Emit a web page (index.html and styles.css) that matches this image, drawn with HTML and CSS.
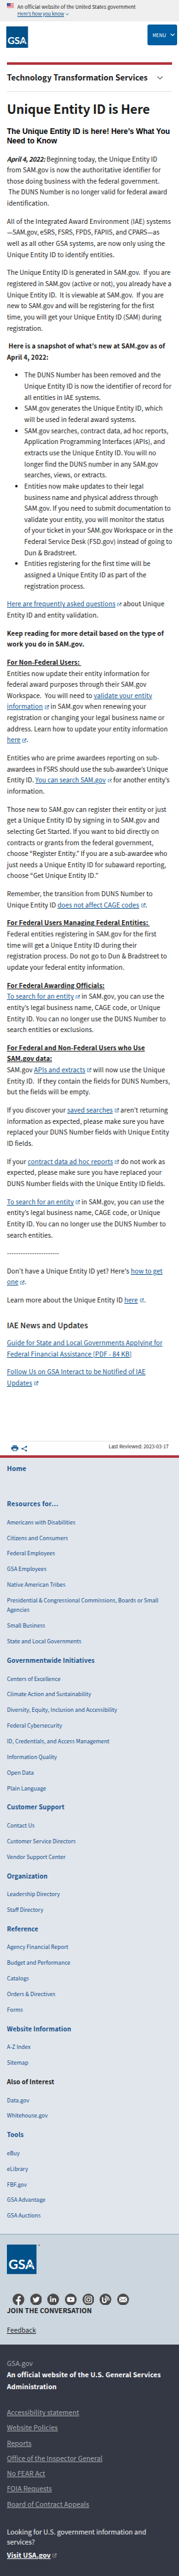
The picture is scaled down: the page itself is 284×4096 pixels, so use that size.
FILE: index.html
```html
<!DOCTYPE html>
<html lang="en">
<head>
<meta charset="utf-8">
<title>Unique Entity ID is Here | GSA</title>
<link rel="stylesheet" href="styles.css">
</head>
<body>
<svg class="defs" aria-hidden="true">
  <symbol id="launch" viewBox="0 0 20 20"><path d="M9 3.2H2.2v14.6h14.600V11" fill="none" stroke="currentColor" stroke-width="2"/><path d="M11.500 1H19.500v8l-3-3-6.800 7.200-2.400-2.400L14.400 4z" fill="currentColor"/></symbol>
</svg>

<div class="banner">
  <svg class="flag" viewBox="0 0 16 11"><rect width="16" height="11" fill="#fff"/><path d="M0 .6h16M0 2.600h16M0 4.600h16M0 6.600h16M0 8.500h16M0 10.400h16" stroke="#d8433c" stroke-width="1"/><rect width="8" height="6.500" fill="#2a3190"/><path d="M1 1.500h6M1.800 3.200h5M1 5h6" stroke="#fff" stroke-width=".8" stroke-dasharray=".8 1"/></svg>
  <div class="banner-text">
    <p>An official website of the United States government</p>
    <p class="know"><a href="#">Here’s how you know</a><svg class="know-chevron" viewBox="0 0 8 5"><path d="M1 1l3 3 3-3" fill="none" stroke="currentColor" stroke-width="1.400"/></svg></p>
  </div>
</div>

<header class="header">
  <svg class="logo" viewBox="0 0 100 100" preserveAspectRatio="none"><rect width="100" height="100" fill="#00508a"/><text class="logo-text" x="5.500" y="83.500" textLength="87.500" lengthAdjust="spacingAndGlyphs">GSA</text><path d="M79 61l2.600 7h7.400l-5.800 4.700 3.300 8.300-7.500-4.800-7.500 4.800 3.300-8.300-5.800-4.700h7.400z" fill="#fff" stroke="#00508a" stroke-width="1.800"/></svg>
  <button class="menu"><span>MENU</span><svg class="menu-chevron" viewBox="0 0 11 7"><path d="M1 1l4.500 4.500L10 1" fill="none" stroke="currentColor" stroke-width="1.700"/></svg></button>
</header>

<nav class="section-nav">
  <span>Technology Transformation Services</span>
  <svg class="nav-chevron" viewBox="0 0 14 8"><path d="M1 1l6 6 6-6" fill="none" stroke="currentColor" stroke-width="1.700"/></svg>
</nav>

<main class="content">
<h1>Unique Entity ID is Here</h1>
<h2>The Unique Entity ID is here! Here’s What You<br>Need to Know</h2>
<p><strong class="date">April 4, 2022:</strong> <span class="snug">Beginning today, the Unique Entity ID</span><br>from SAM.gov is now the authoritative identifier for<br>those doing business with the federal government.<br><span class="snug">&nbsp;The DUNS Number is no longer valid for federal award</span><br>identification.</p>
<p><span class="loose">All of the Integrated Award Environment (IAE) systems</span><br><span class="tight">—SAM.gov, eSRS, FSRS, FPDS, FAPIIS, and CPARS—as</span><br>well as all other GSA systems, are now only using the<br>Unique Entity ID to identify entities.</p>
<p class="snug">The Unique Entity ID is generated in SAM.gov.&nbsp; If you are<br>registered in SAM.gov (active or not), you already have a<br>Unique Entity ID.&nbsp; It is viewable at SAM.gov.&nbsp; If you are<br>new to SAM.gov and will be registering for the first<br>time, you will get your Unique Entity ID (SAM) during<br>registration.</p>
<p><strong>&nbsp;Here is a snapshot of what’s new at SAM.gov as of<br>April 4, 2022:</strong></p>
<ul>
  <li>The DUNS Number has been removed and the<br>Unique Entity ID is now the identifier of record for<br>all entities in IAE systems.</li>
  <li>SAM.gov generates the Unique Entity ID, which<br>will be used in federal award systems.</li>
  <li>SAM.gov searches, contract data, ad hoc reports,<br>Application Programming Interfaces (APIs), and<br>extracts use the Unique Entity ID. You will no<br>longer find the DUNS number in any SAM.gov<br>searches, views, or extracts.</li>
  <li>Entities now make updates to their legal<br>business name and physical address through<br>SAM.gov. If you need to submit documentation to<br>validate your entity, you will monitor the status<br>of your ticket in your SAM.gov Workspace or in the<br>Federal Service Desk (FSD.gov) instead of going to<br>Dun &amp; Bradstreet.</li>
  <li>Entities registering for the first time will be<br>assigned a Unique Entity ID as part of the<br>registration process.</li>
</ul>
<p><a href="#">Here are frequently asked questions</a><svg class="ext"><use href="#launch"/></svg> about Unique<br>Entity ID and entity validation.</p>
<p><strong>Keep reading for more detail based on the type of<br>work you do in SAM.gov.</strong></p>
<p><strong class="label">For Non-Federal Users:&nbsp;</strong><br>Entities now update their entity information for<br>federal award purposes through their SAM.gov<br>Workspace.&nbsp; You will need to <a href="#">validate your entity<br>information</a><svg class="ext"><use href="#launch"/></svg> in SAM.gov when renewing your<br>registration or changing your legal business name or<br>address. Learn how to update your entity information<br><a href="#">here</a><svg class="ext"><use href="#launch"/></svg>.</p>
<p>Entities who are prime awardees reporting on sub-<br><span class="tight">awardees in FSRS should use the sub-awardee’s Unique</span><br><span class="snug">Entity ID. <a href="#">You can search SAM.gov</a><svg class="ext"><use href="#launch"/></svg> for another entity’s</span><br>information.</p>
<p>Those new to SAM.gov can register their entity or just<br>get a Unique Entity ID by signing in to SAM.gov and<br>selecting Get Started. If you want to bid directly on<br>contracts or grants from the federal government,<br><span class="snug">choose “Register Entity.” If you are a sub-awardee who</span><br>just needs a Unique Entity ID for subaward reporting,<br>choose “Get Unique Entity ID.”</p>
<p>Remember, the transition from DUNS Number to<br>Unique Entity ID <a href="#">does not affect CAGE codes</a><svg class="ext"><use href="#launch"/></svg>.</p>
<p><strong class="label">For Federal Users Managing Federal Entities:&nbsp;</strong><br>Federal entities registering in SAM.gov for the first<br>time will get a Unique Entity ID during their<br>registration process. Do not go to Dun &amp; Bradstreet to<br>update your federal entity information.</p>
<p><strong class="label">For Federal Awarding Officials:</strong><br><a href="#">To search for an entity</a><svg class="ext"><use href="#launch"/></svg> in SAM.gov, you can use the<br>entity’s legal business name, CAGE code, or Unique<br>Entity ID. You can no longer use the DUNS Number to<br>search entities or exclusions.</p>
<p><strong class="label">For Federal and Non-Federal Users who Use<br>SAM.gov data:</strong><br>SAM.gov <a href="#">APIs and extracts</a><svg class="ext"><use href="#launch"/></svg> will now use the Unique<br>Entity ID.&nbsp; If they contain the fields for DUNS Numbers,<br>but the fields will be empty.</p>
<p>If you discover your <a href="#">saved searches</a><svg class="ext"><use href="#launch"/></svg> aren’t returning<br>information as expected, please make sure you have<br>replaced your DUNS Number fields with Unique Entity<br>ID fields.</p>
<p>If your <a href="#">contract data ad hoc reports</a><svg class="ext"><use href="#launch"/></svg> do not work as<br>expected, please make sure you have replaced your<br>DUNS Number fields with the Unique Entity ID fields.</p>
<p><a href="#">To search for an entity</a><svg class="ext"><use href="#launch"/></svg> in SAM.gov, you can use the<br>entity’s legal business name, CAGE code, or Unique<br>Entity ID. You can no longer use the DUNS Number to<br>search entities.</p>
<p>-----------------------</p>
<p>Don’t have a Unique Entity ID yet? Here's <a href="#">how to get<br>one</a><svg class="ext"><use href="#launch"/></svg>.</p>
<p>Learn more about the Unique Entity ID <a href="#">here</a><svg class="ext"><use href="#launch"/></svg>.</p>
<h3>IAE News and Updates</h3>
<p><a href="#">Guide for State and Local Governments Applying for<br>Federal Financial Assistance [PDF - 84 KB]</a></p>
<p><a href="#">Follow Us on GSA Interact to be Notified of IAE<br>Updates</a><svg class="ext"><use href="#launch"/></svg></p>
</main>

<div class="page-meta">
  <div class="tools">
    <svg class="print" viewBox="0 0 16 13"><path d="M3.200 0h9.600v2.400H3.200z" fill="currentColor"/><path d="M2 3.200h12a2 2 0 0 1 2 2v4.600h-3.200V7.200H3.200v2.600H0V5.200a2 2 0 0 1 2-2z" fill="currentColor"/><path d="M4 8v4.300h8V8" fill="none" stroke="currentColor" stroke-width="1.500"/></svg>
    <svg class="share" viewBox="0 0 13 13"><path d="M11 2L2 6.500 11 11" fill="none" stroke="currentColor" stroke-width="1.300"/><circle cx="11" cy="2" r="1.900" fill="currentColor"/><circle cx="2" cy="6.500" r="1.900" fill="currentColor"/><circle cx="11" cy="11" r="1.900" fill="currentColor"/></svg>
  </div>
  <span>Last Reviewed: 2023-03-17</span>
</div>

<footer>
<div class="footer-nav">
  <h4 class="home">Home</h4>
  <h4 class="first">Resources for…</h4>
  <ul><li>Americans with Disabilities</li><li>Citizens and Consumers</li><li>Federal Employees</li><li>GSA Employees</li><li>Native American Tribes</li><li>Presidential &amp; Congressional Commissions, Boards or Small<br>Agencies</li><li>Small Business</li><li>State and Local Governments</li></ul>
  <h4>Governmentwide Initiatives</h4>
  <ul><li>Centers of Excellence</li><li>Climate Action and Sustainability</li><li>Diversity, Equity, Inclusion and Accessibility</li><li>Federal Cybersecurity</li><li>ID, Credentials, and Access Management</li><li>Information Quality</li><li>Open Data</li><li>Plain Language</li></ul>
  <h4>Customer Support</h4>
  <ul><li>Contact Us</li><li>Customer Service Directors</li><li>Vendor Support Center</li></ul>
  <h4>Organization</h4>
  <ul><li>Leadership Directory</li><li>Staff Directory</li></ul>
  <h4>Reference</h4>
  <ul><li>Agency Financial Report</li><li>Budget and Performance</li><li>Catalogs</li><li>Orders &amp; Directives</li><li>Forms</li></ul>
  <h4>Website Information</h4>
  <ul><li>A-Z Index</li><li>Sitemap</li></ul>
  <h4 class="plain">Also of Interest</h4>
  <ul><li>Data.gov</li><li>Whitehouse.gov</li></ul>
  <h4>Tools</h4>
  <ul><li>eBuy</li><li>eLibrary</li><li>FBF.gov</li><li>GSA Advantage</li><li>GSA Auctions</li></ul>
</div>

<div class="footer-social">
  <div class="brand"><svg class="logo-large" viewBox="0 0 100 100" preserveAspectRatio="none"><rect width="100" height="100" fill="#00508a"/><text class="logo-text" x="5.500" y="83.500" textLength="87.500" lengthAdjust="spacingAndGlyphs">GSA</text><path d="M79 61l2.600 7h7.400l-5.800 4.700 3.300 8.300-7.500-4.800-7.500 4.800 3.300-8.300-5.800-4.700h7.400z" fill="#fff" stroke="#00508a" stroke-width="1.800"/></svg><svg class="reg" viewBox="0 0 6 6"><circle cx="3" cy="3" r="2.200" fill="#8a9095"/></svg></div>
  <div class="social">
    <svg viewBox="0 0 27 27"><circle cx="13.500" cy="13.500" r="13.500"/><path d="M11.300 27v-9.400H7.600v-3.900h3.700v-3.100c0-3.300 2-5.100 4.900-5.100 1.300 0 2.400.1 2.700.2v3.300H17c-1.500 0-1.800.8-1.800 1.800v2.900h3.600l-.5 3.900h-3.100V27z"/></svg>
    <svg viewBox="0 0 27 27"><circle cx="13.500" cy="13.500" r="13.500"/><path d="M21.500 8.900c-.6.300-1.200.5-1.900.5.700-.4 1.200-1 1.400-1.800-.6.400-1.300.6-2.100.8a3.300 3.300 0 0 0-5.600 3c-2.700-.1-5.100-1.400-6.800-3.400-.9 1.500-.4 3.400 1 4.400-.5 0-1-.2-1.500-.4 0 1.600 1.100 2.900 2.600 3.200-.5.100-1 .1-1.500.1.400 1.300 1.600 2.200 3.100 2.300a6.600 6.600 0 0 1-4.800 1.300c4.700 3 12.600 1.700 14.500-5.200.3-1 .3-2.100.2-3.200.6-.4 1-.9 1.400-1.600z"/></svg>
    <svg viewBox="0 0 27 27"><circle cx="13.500" cy="13.500" r="13.500"/><path d="M6.500 10.700h2.900v8.700H6.500zM11.300 10.700H14v1.200c.6-.9 1.600-1.400 3-1.400 2.900 0 3.500 1.900 3.500 4.300v4.600h-2.900v-4.100c0-1 0-2.300-1.400-2.300s-1.900 1-1.900 2.300v4.100h-3z"/><circle class="mark" cx="7.900" cy="7.900" r="1.700"/></svg>
    <svg viewBox="0 0 27 27"><circle cx="13.500" cy="13.500" r="13.500"/><path fill-rule="evenodd" d="M7.500 8h12q2.500 0 2.500 2.500v6.300q0 2.400-2.500 2.400h-12Q5 19.200 5 16.800v-6.300Q5 8 7.500 8zm4.300 2.800v5.700l5-2.900z"/></svg>
    <svg viewBox="0 0 27 27"><circle cx="13.500" cy="13.500" r="13.500"/><rect class="line" x="5.800" y="5.800" width="15.400" height="15.400" rx="4.300"/><circle class="line" cx="13.500" cy="13.500" r="3.800"/><circle class="mark" cx="17.800" cy="9.200" r="1"/></svg>
    <svg viewBox="0 0 27 27"><circle cx="13.500" cy="13.500" r="13.500"/><path class="line thick" d="M7 8v8.500a4 4 0 1 0 4-4"/><path class="line" d="M12.500 9a7.500 7.500 0 0 1 6.500 7.500M12.500 5.500A10.500 10.500 0 0 1 22.500 16"/></svg>
    <svg viewBox="0 0 27 27"><circle cx="13.500" cy="13.500" r="13.500"/><path d="M5 7.500h17l-8.500 7.200zM4.500 8.600l5.900 5-5.900 5.200zM22.500 8.600l-5.900 5 5.900 5.200zM5 19.500l6.300-5.200 2.200 1.900 2.200-1.900 6.300 5.200z"/></svg>
  </div>
  <p class="join">JOIN THE CONVERSATION</p>
  <p class="feedback"><a href="#">Feedback</a></p>
</div>

<div class="identifier">
  <p class="domain">GSA.gov</p>
  <p class="agency">An official website of the U.S. General Services<br>Administration</p>
  <ul><li><a href="#">Accessibility statement</a></li><li><a href="#">Website Policies</a></li><li><a href="#">Reports</a></li><li><a href="#">Office of the Inspector General</a></li><li><a href="#">No FEAR Act</a></li><li><a href="#">FOIA Requests</a></li><li><a href="#">Board of Contract Appeals</a></li></ul>
  <p class="looking">Looking for U.S. government information and<br>services?</p>
  <p class="visit"><a href="#">Visit USA.gov</a><svg class="ext"><use href="#launch"/></svg></p>
</div>
</footer>
</body>
</html>
```
FILE: styles.css
```css
/* 1rem is one 41.2nd of the page width, so every length scales with it */
html { font-size: calc(100vw / 41.2); }
* { box-sizing: border-box; margin: 0; padding: 0; }
body {
  background: #fff;
  color: #1b1b1b;
  font-family: "Noto Sans CJK KR", "Noto Sans", sans-serif;
  font-size: 1.46rem;
  line-height: 2.56rem;
  letter-spacing: .017rem;
  white-space: nowrap;
  overflow-x: hidden;
}
ul { list-style: none; }
svg { display: block; }
a { color: #12558f; text-decoration: underline; text-decoration-thickness: .1rem; text-underline-offset: .2rem; }
.defs { position: absolute; width: 0; height: 0; }
.logo-text { font: 700 43px Lato, sans-serif; fill: #fff; letter-spacing: 0; }

.banner { display: flex; height: 4.86rem; padding: .66rem 1.6rem 0; background: #efefef; font-size: 1.13rem; line-height: 1.62rem; letter-spacing: .01rem; }
.flag { width: 1.6rem; height: 1.1rem; margin: .12rem .8rem 0 0; }
.know { display: flex; align-items: center; letter-spacing: -.02rem; }
.know-chevron { width: .8rem; height: .5rem; margin: .3rem 0 0 .4rem; color: #12558f; }

.header { display: flex; justify-content: space-between; align-items: flex-start; height: 9.54rem; padding: .84rem .5rem 0 1.5rem; }
.logo { width: 5rem; height: 4.95rem; margin-top: .4rem; }
.menu { display: flex; align-items: center; width: 6.8rem; height: 4.8rem; padding: 0 0 0 1.2rem; border: 0; border-radius: .4rem; background: #005ea2; color: #fff; font: 1.1rem "Noto Sans CJK KR", sans-serif; }
.menu-chevron { width: 1.1rem; height: .7rem; margin-left: 1rem; }

.section-nav { display: flex; align-items: center; margin: 0 1.6rem; height: 6.79rem; border-top: .67rem solid #b0343e; border-bottom: .1rem solid #dfe1e2; font-size: 1.81rem; font-weight: 700; letter-spacing: 0; }
.nav-chevron { width: 1.4rem; height: .8rem; margin: -.2rem 0 0 2.2rem; color: #555; }

.content { padding: 2.02rem 1.6rem 0; }
h1 { font-size: 2.88rem; line-height: 3.8rem; letter-spacing: -.025rem; }
h2 { margin: 2.26rem 0 1.66rem; color: #000; font: 700 1.73rem/2.2rem "Liberation Sans", Arial, sans-serif; letter-spacing: 0; }
h3 { margin: 3.4rem 0 1.68rem; font-size: 1.73rem; font-weight: 500; line-height: 2.2rem; letter-spacing: .015rem; }
.content p + p, .content ul, .content ul + p { margin-top: 1.6rem; }
.content ul { padding-left: 4rem; list-style: disc; letter-spacing: .008rem; }
.date { font-style: italic; letter-spacing: -.04rem; }
.snug { letter-spacing: .003rem; }
.tight { letter-spacing: -.01rem; }
.loose { letter-spacing: .026rem; }
.label { text-decoration: underline; text-decoration-thickness: .1rem; text-underline-offset: .2rem; }
.ext { display: inline-block; width: 1rem; height: 1rem; margin-left: .42rem; color: #12558f; vertical-align: -.02rem; }

.page-meta { display: flex; justify-content: space-between; margin: 12.14rem 2.4rem 0; height: 3.3rem; border-top: .1rem solid #e3e3e3; font-size: 1.12rem; line-height: 2.3rem; letter-spacing: 0; }
.tools { display: flex; align-items: center; gap: .8rem; height: 3.2rem; padding-left: .2rem; color: #14538c; }
.print { width: 1.6rem; height: 1.4rem; }
.share { width: 1.3rem; height: 1.3rem; }

.footer-nav { height: 179.65rem; padding: 1.2rem 1.6rem 0; border-top: .7rem solid #b0343e; background: #e1e6ed; color: #17518a; }
.footer-nav h4 { font-size: 1.44rem; line-height: 2.56rem; }
.footer-nav .home { margin-bottom: 5.51rem; font-size: 1.5rem; }
.footer-nav .first { letter-spacing: .06rem; }
.footer-nav .plain { color: #1b1b1b; }
.footer-nav ul { display: grid; gap: 1.4rem; margin: 1.91rem 0; font-size: 1.26rem; line-height: 2.216rem; letter-spacing: 0; }

.footer-social { height: 25.45rem; padding: 2.27rem 1.6rem 0; border-top: .1rem solid #8fa9bb; background: #cbd6df; }
.brand { display: flex; gap: .35rem; }
.logo-large { width: 6.8rem; height: 6.8rem; }
.reg { width: .6rem; height: .6rem; margin-top: -.1rem; }
.social { display: flex; gap: 1.32rem; margin: 4.5rem 0 0 1.3rem; }
.social svg { width: 2.7rem; height: 2.7rem; fill: #4a4a4a; }
.social path, .social .mark { fill: #fff; }
.social .line { fill: none; stroke: #fff; stroke-width: 1.8; }
.social .thick { stroke-width: 2.800; }
.join { font-size: 1.53rem; font-weight: 700; line-height: 2.6rem; }
.feedback { margin-top: 1.8rem; }
.feedback a { color: #1b1b1b; }

.identifier { height: 53.4rem; padding: 3.05rem 1.6rem 0; background: #343845; color: #a9aeb1; font-size: 1.526rem; line-height: 2.7rem; }
.identifier a { color: inherit; }
.agency { color: #fff; font-weight: 700; }
.identifier ul { margin-top: 2.84rem; line-height: 3.515rem; }
.looking { margin-top: 3.55rem; color: #f0f0f0; line-height: 2.24rem; letter-spacing: 0; }
.visit { margin-top: .75rem; color: #fff; font-weight: 700; }
.visit .ext { color: #a9aeb1; }
```
